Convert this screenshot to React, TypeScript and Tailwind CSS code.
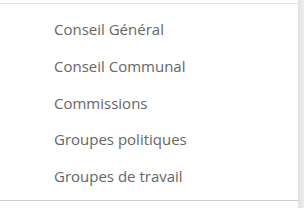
import React from "react";

const items = [
  "Conseil Général",
  "Conseil Communal",
  "Commissions",
  "Groupes politiques",
  "Groupes de travail",
];

export default function App() {
  return (
    <div className="flex h-[208px] w-[304px] bg-white">
      <div className="flex flex-1 flex-col pt-[3px]">
        <div className="h-px shrink-0 bg-[#e2e2e2]" />
        <ul
          className="flex flex-col gap-[17.75px] pt-[16px] pl-[54px] text-[15px] leading-[19px] text-[#666666]"
          style={{ fontFamily: '"Open Sans", "Noto Sans", sans-serif' }}
        >
          {items.map((t) => (
            <li key={t}>{t}</li>
          ))}
        </ul>
        <div className="mt-auto mb-[7px] h-px shrink-0 bg-[#cccccc]" />
      </div>
      <div className="w-[6px] bg-gradient-to-r from-[#dfe2e6] to-[#eceef0]" />
    </div>
  );
}
